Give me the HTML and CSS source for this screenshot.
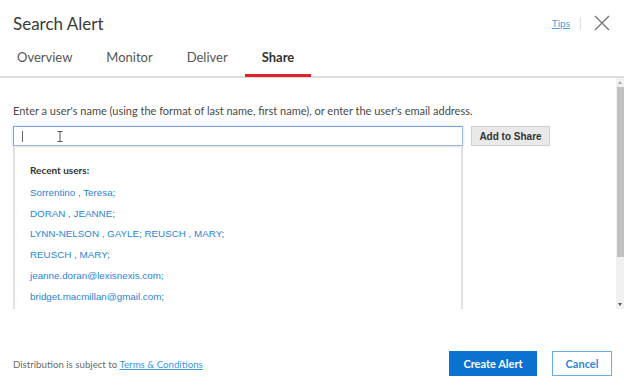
FILE: index.html
```html
<!DOCTYPE html>
<html lang="en">
<head>
    <meta charset="UTF-8">
    <title>Search Alert</title>
    <link rel="stylesheet" href="styles.css">
</head>
<body>
    <div class="dialog">
        <div class="header">
            <h1 class="title">Search Alert</h1>
            <div class="header-tools">
                <a class="tips" href="#">Tips</a>
                <span class="divider"></span>
                <svg class="close" width="16" height="16" viewBox="0 0 16 16">
                    <path d="M1 1 L15 15 M15 1 L1 15" stroke="#777" stroke-width="1.4" fill="none"/>
                </svg>
            </div>
        </div>
        <div class="tabs">
            <span class="tab">Overview</span>
            <span class="tab">Monitor</span>
            <span class="tab">Deliver</span>
            <span class="tab active">Share</span>
        </div>
        <div class="body">
            <div class="content">
                <p class="hint">Enter a user's name (using the format of last name, first name), or enter the user's email address.</p>
                <div class="share-row">
                    <div class="picker">
                        <div class="field">
                            <span class="caret"></span>
                            <svg class="ibeam" width="6" height="11" viewBox="0 0 6 11">
                                <path d="M0.5 0.5 H5.5 M3 0.5 V10.5 M0.5 10.5 H5.5" stroke="#555" stroke-width="1" fill="none"/>
                            </svg>
                        </div>
                        <div class="recent">
                            <p class="recent-title">Recent users:</p>
                            <a class="user" href="#">Sorrentino , Teresa;</a>
                            <a class="user" href="#">DORAN , JEANNE;</a>
                            <a class="user" href="#">LYNN-NELSON , GAYLE; REUSCH , MARY;</a>
                            <a class="user" href="#">REUSCH , MARY;</a>
                            <a class="user" href="#">jeanne.doran@lexisnexis.com;</a>
                            <a class="user" href="#">bridget.macmillan@gmail.com;</a>
                        </div>
                    </div>
                    <button class="add-btn">Add to Share</button>
                </div>
            </div>
            <div class="scrollbar">
                <span class="arrow up"></span>
                <span class="thumb"></span>
                <span class="arrow down"></span>
            </div>
        </div>
        <div class="footer">
            <p class="terms">Distribution is subject to <a href="#">Terms &amp; Conditions</a></p>
            <div class="actions">
                <button class="primary">Create Alert</button>
                <button class="secondary">Cancel</button>
            </div>
        </div>
    </div>
</body>
</html>
```

FILE: styles.css
```css
body {
    margin: 0;
    background: #fff;
    font-family: Lato, "Open Sans", sans-serif;
    color: #333;
}
.dialog {
    width: 624px;
    height: 390px;
    display: flex;
    flex-direction: column;
    overflow: hidden;
}
.header {
    display: flex;
    justify-content: space-between;
    align-items: center;
    padding: 10px 13px 0 13px;
    height: 26px;
}
.title {
    margin: 0;
    font-size: 17px;
    font-weight: normal;
    color: #3a3a3a;
}
.header-tools {
    display: flex;
    align-items: center;
}
.tips {
    font-size: 10px;
    color: #4a9fe0;
    margin-right: 10px;
}
.divider {
    width: 1px;
    height: 13px;
    background: #ddd;
    margin-right: 13px;
}
.close {
    display: block;
    margin-right: 1px;
}
.tabs {
    display: flex;
    margin-top: 10px;
    border-bottom: 2px solid #dcdcdc;
}
.tab {
    padding: 3px 17px 9px 17px;
    font-size: 13px;
    line-height: 16px;
    color: #555;
    border-bottom: 3px solid transparent;
    margin-bottom: -1px;
}
.tab.active {
    font-weight: bold;
    color: #333;
    border-bottom-color: #e32228;
}
.body {
    display: flex;
    height: 231px;
    overflow: hidden;
}
.content {
    flex: 1;
    padding: 0 13px;
}
.hint {
    margin: 26px 0 9px 0;
    font-size: 11px;
    line-height: 13px;
    color: #4a4a4a;
}
.share-row {
    display: flex;
    align-items: flex-start;
}
.picker {
    width: 450px;
}
.field {
    height: 18px;
    border: 1px solid #9dbde0;
    border-top-color: #7aa5d4;
    border-left-color: #7aa5d4;
    box-shadow: 0 0 3px rgba(90, 150, 220, 0.35);
    display: flex;
    align-items: center;
    padding-left: 8px;
}
.caret {
    width: 1px;
    height: 11px;
    background: #666;
}
.ibeam {
    margin-left: 34px;
}
.recent {
    border-left: 2px solid #e2e2e2;
    border-right: 2px solid #e2e2e2;
    border-top: 1px solid #e4e4e4;
    padding: 17px 15px 20px 15px;
    font-family: "Liberation Sans", Arial, sans-serif;
    font-size: 9.8px;
}
.recent-title {
    margin: 0 0 7px 0;
    font-family: Lato, sans-serif;
    font-weight: bold;
    font-size: 10px;
    line-height: 12px;
    color: #333;
}
.user {
    display: block;
    color: #2a84d6;
    text-decoration: none;
    line-height: 20.7px;
}
.add-btn {
    margin-left: 8px;
    width: 79px;
    height: 20px;
    background: #e9e9e9;
    border: 1px solid #d0d0d0;
    font-family: "Liberation Sans", Arial, sans-serif;
    font-weight: bold;
    font-size: 10px;
    color: #333;
    padding: 0;
}
.scrollbar {
    width: 8px;
    background: #f1f1f1;
    display: flex;
    flex-direction: column;
    align-items: center;
}
.arrow {
    width: 0;
    height: 0;
    border-left: 2px solid transparent;
    border-right: 2px solid transparent;
    margin: 3px 0;
}
.arrow.up {
    border-bottom: 3px solid #aaa;
}
.arrow.down {
    border-top: 3px solid #555;
    margin-top: auto;
}
.thumb {
    width: 7px;
    height: 170px;
    background: #c1c1c1;
}
.footer {
    display: flex;
    justify-content: space-between;
    align-items: center;
    padding: 0 12px 0 13px;
    margin-top: 42px;
}
.terms {
    margin: 0;
    font-size: 9.7px;
    color: #6a6a6a;
}
.terms a {
    color: #3a97e0;
}
.actions {
    display: flex;
    gap: 15px;
}
.actions button {
    height: 25px;
    font-family: Lato, sans-serif;
    font-weight: bold;
    font-size: 11px;
    padding: 0;
}
.primary {
    width: 88px;
    background: #0b72cf;
    color: #fff;
    border: 1px solid #0b72cf;
}
.secondary {
    width: 60px;
    background: #fff;
    color: #2f85d3;
    border: 1px solid #6aaee6;
}
```
